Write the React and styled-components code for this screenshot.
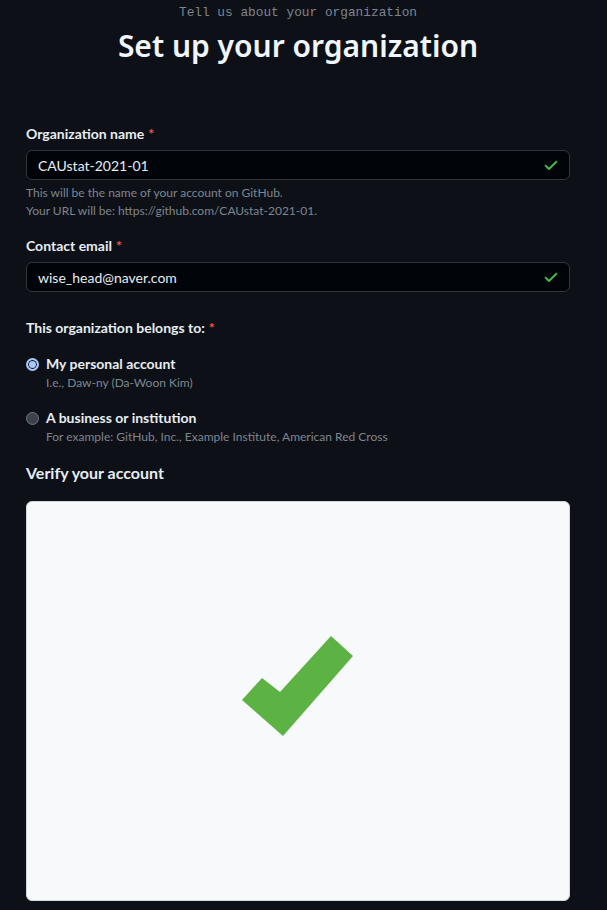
import styled, { createGlobalStyle } from "styled-components";

const GlobalStyle = createGlobalStyle`
  html, body {
    margin: 0;
    padding: 0;
    background: #0d1117;
  }
  body {
    font-family: Lato, "Noto Sans", "Liberation Sans", sans-serif;
    color: #e6edf3;
  }
`;

const Page = styled.div`
  width: 607px;
  height: 910px;
  overflow: hidden;
  background: #0d1117;
  box-sizing: border-box;
  padding: 4px 37px 0 26px;
`;

const Header = styled.header`
  display: flex;
  flex-direction: column;
  align-items: center;
`;

const Eyebrow = styled.div`
  font-family: "Liberation Mono", "DejaVu Sans Mono", monospace;
  font-size: 12.8px;
  line-height: 18px;
  color: #7d8590;
`;

const Title = styled.h1`
  margin: 4px 0 0;
  font-family: "Noto Sans", sans-serif;
  font-size: 30px;
  line-height: 40px;
  font-weight: 600;
  color: #f0f6fc;
`;

const Form = styled.form`
  display: flex;
  flex-direction: column;
  margin-top: 58px;
`;

const Field = styled.div`
  display: flex;
  flex-direction: column;
  margin-bottom: ${p => p.gap || 0}px;
`;

const Label = styled.label`
  font-size: 14px;
  line-height: 20px;
  font-weight: 700;
  color: #e6edf3;
  margin-bottom: 6px;
`;

const Req = styled.span`
  color: #f85149;
  margin-left: 4px;
`;

const InputWrap = styled.div`
  display: flex;
  align-items: center;
  justify-content: space-between;
  height: 30px;
  box-sizing: border-box;
  padding: 0 10px 0 11px;
  background: #010409;
  border: 1px solid #30363d;
  border-radius: 6px;
  font-size: 14px;
  color: #e6edf3;
`;

const Note = styled.p`
  margin: ${p => p.top || 0}px 0 0;
  font-size: 12px;
  line-height: 18px;
  color: #7d8590;
`;

const Check = () => (
  <svg width="16" height="16" viewBox="0 0 16 16" fill="#3fb950">
    <path d="M13.78 4.22a.75.75 0 0 1 0 1.06l-7.25 7.25a.75.75 0 0 1-1.06 0L2.22 9.28a.75.75 0 0 1 1.06-1.06L6 10.94l6.72-6.72a.75.75 0 0 1 1.06 0Z" stroke="#3fb950" strokeWidth="0.8" />
  </svg>
);

const Option = styled.div`
  display: grid;
  grid-template-columns: 13px 1fr;
  column-gap: 7px;
  align-items: center;
  margin-top: ${p => p.top}px;
`;

const Radio = styled.span`
  width: 13px;
  height: 13px;
  box-sizing: border-box;
  border-radius: 50%;
  ${p =>
    p.checked
      ? `background: #a8c7fa; border: 2px solid #a8c7fa; box-shadow: inset 0 0 0 1px #0d1117;`
      : `background: #3d424a; border: 1px solid #6e7681;`}
`;

const OptionTitle = styled.span`
  font-size: 14px;
  line-height: 20px;
  font-weight: 700;
  color: #e6edf3;
`;

const OptionNote = styled.span`
  grid-column: 2;
  font-size: 12px;
  line-height: 18px;
  color: #7d8590;
`;

const Section = styled.h2`
  margin: 15px 0 0;
  font-size: 16px;
  line-height: 24px;
  font-weight: 700;
  color: #e6edf3;
`;

const VerifyBox = styled.div`
  margin-top: 16px;
  height: 400px;
  display: flex;
  align-items: center;
  justify-content: center;
  padding-bottom: 29px;
  background: #f8f9fb;
  border: 1px solid #d0d7de;
  border-radius: 6px;
  box-sizing: border-box;
`;

const BigCheck = () => (
  <svg width="112" height="101" viewBox="243 636 112 101">
    <polygon points="243,700 263,678 281,692 332,636 354,656 284,736" fill="#5cb243" />
  </svg>
);

export default function App() {
  return (
    <Page>
      <GlobalStyle />
      <Header>
        <Eyebrow>Tell us about your organization</Eyebrow>
        <Title>Set up your organization</Title>
      </Header>
      <Form>
        <Field gap={16}>
          <Label>Organization name<Req>*</Req></Label>
          <InputWrap>
            <span>CAUstat-2021-01</span>
            <Check />
          </InputWrap>
          <Note top={4}>
            This will be the name of your account on GitHub.
            <br />
            Your URL will be: https://github.com/CAUstat-2021-01.
          </Note>
        </Field>
        <Field gap={26}>
          <Label>Contact email<Req>*</Req></Label>
          <InputWrap>
            <span>wise_head@naver.com</span>
            <Check />
          </InputWrap>
        </Field>
        <Label>This organization belongs to:<Req>*</Req></Label>
        <Option top={10}>
          <Radio checked />
          <OptionTitle>My personal account</OptionTitle>
          <OptionNote>I.e., Daw-ny (Da-Woon Kim)</OptionNote>
        </Option>
        <Option top={16}>
          <Radio />
          <OptionTitle>A business or institution</OptionTitle>
          <OptionNote>For example: GitHub, Inc., Example Institute, American Red Cross</OptionNote>
        </Option>
        <Section>Verify your account</Section>
        <VerifyBox>
          <BigCheck />
        </VerifyBox>
      </Form>
    </Page>
  );
}
